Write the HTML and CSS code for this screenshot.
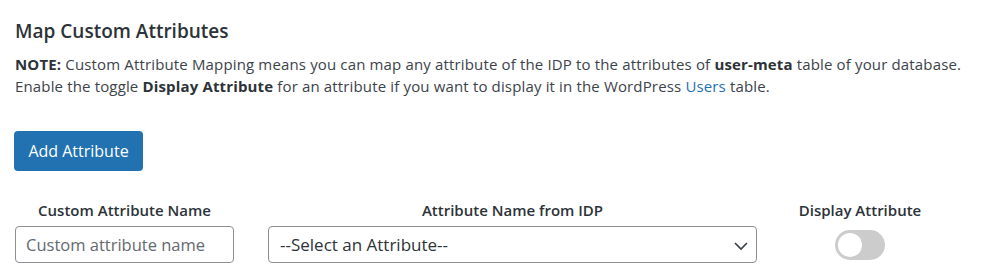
FILE: index.html
```html
<!DOCTYPE html>
<html lang="en">
<head>
    <meta charset="UTF-8">
    <meta name="viewport" content="width=device-width, initial-scale=1.0">
    <title>Map Custom Attributes</title>
    <link rel="stylesheet" href="styles.css">
</head>
<body>
    <div class="panel">
        <h2 class="panel-title">Map Custom Attributes</h2>

        <p class="note">
            <b>NOTE:</b> Custom Attribute Mapping means you can map any attribute of the IDP to the attributes of <b>user-meta</b> table of your database.<br>
            Enable the toggle <b>Display Attribute</b> for an attribute if you want to display it in the WordPress <a href="#">Users</a> table.
        </p>

        <button type="button" class="btn-primary">Add Attribute</button>

        <div class="attr-grid">
            <div class="attr-head">Custom Attribute Name</div>
            <div class="attr-head">Attribute Name from IDP</div>
            <div class="attr-head">Display Attribute</div>

            <input type="text" class="attr-input" placeholder="Custom attribute name">
            <div class="select-wrap">
                <select class="attr-select">
                    <option>--Select an Attribute--</option>
                </select>
                <svg class="select-arrow" width="16" height="16" viewBox="0 0 16 16"><path d="M2 5 8 11l6-6" fill="none" stroke="#3c434a" stroke-width="1.7"/></svg>
            </div>
            <label class="switch">
                <input type="checkbox">
                <span class="slider"></span>
            </label>
        </div>
    </div>
</body>
</html>
```

FILE: styles.css
```css
body {
    margin: 0;
    background: #fff;
    font-family: "Open Sans", "Noto Sans", sans-serif;
    color: #3c434a;
}
.panel {
    padding: 16px 15px 10px;
}
.panel-title {
    margin: 0 0 7px;
    font-size: 19px;
    font-weight: 600;
    color: #2c3338;
    line-height: 30px;
}
.note {
    margin: 0;
    font-size: 15px;
    line-height: 22px;
    letter-spacing: 0.15px;
}
.note b {
    font-weight: 700;
    color: #2c3338;
}
.note a {
    color: #2271b1;
    text-decoration: none;
}
.btn-primary {
    display: block;
    margin-top: 34px;
    margin-left: -1px;
    width: 129px;
    height: 40px;
    background: #2271b1;
    color: #fff;
    border: none;
    border-radius: 4px;
    font-family: inherit;
    font-size: 16px;
    cursor: pointer;
}
.attr-grid {
    display: grid;
    grid-template-columns: 219px 489px 138px;
    column-gap: 34px;
    row-gap: 6px;
    margin-top: 29px;
    align-items: center;
    justify-items: center;
}
.attr-head {
    font-size: 15px;
    font-weight: 600;
    color: #2c3338;
}
.attr-input,
.attr-select {
    width: 100%;
    height: 37px;
    box-sizing: border-box;
    border: 1px solid #8c8f94;
    border-radius: 4px;
    font-family: inherit;
    font-size: 16.5px;
    color: #2c3338;
    background: #fff;
}
.attr-input {
    padding: 0 10px;
}
.attr-input::placeholder {
    color: #646970;
}
.select-wrap {
    position: relative;
    width: 100%;
}
.attr-select {
    appearance: none;
    padding: 0 30px 0 11px;
    font-size: 17px;
}
.select-arrow {
    position: absolute;
    right: 8px;
    top: 12px;
    pointer-events: none;
}
.switch {
    position: relative;
    width: 50px;
    height: 30px;
    display: inline-block;
}
.switch input {
    display: none;
}
.slider {
    position: absolute;
    inset: 0;
    background: #ccc;
    border-radius: 15px;
}
.slider::before {
    content: "";
    position: absolute;
    left: 3px;
    top: 3px;
    width: 24px;
    height: 24px;
    border-radius: 50%;
    background: #fff;
}
```
